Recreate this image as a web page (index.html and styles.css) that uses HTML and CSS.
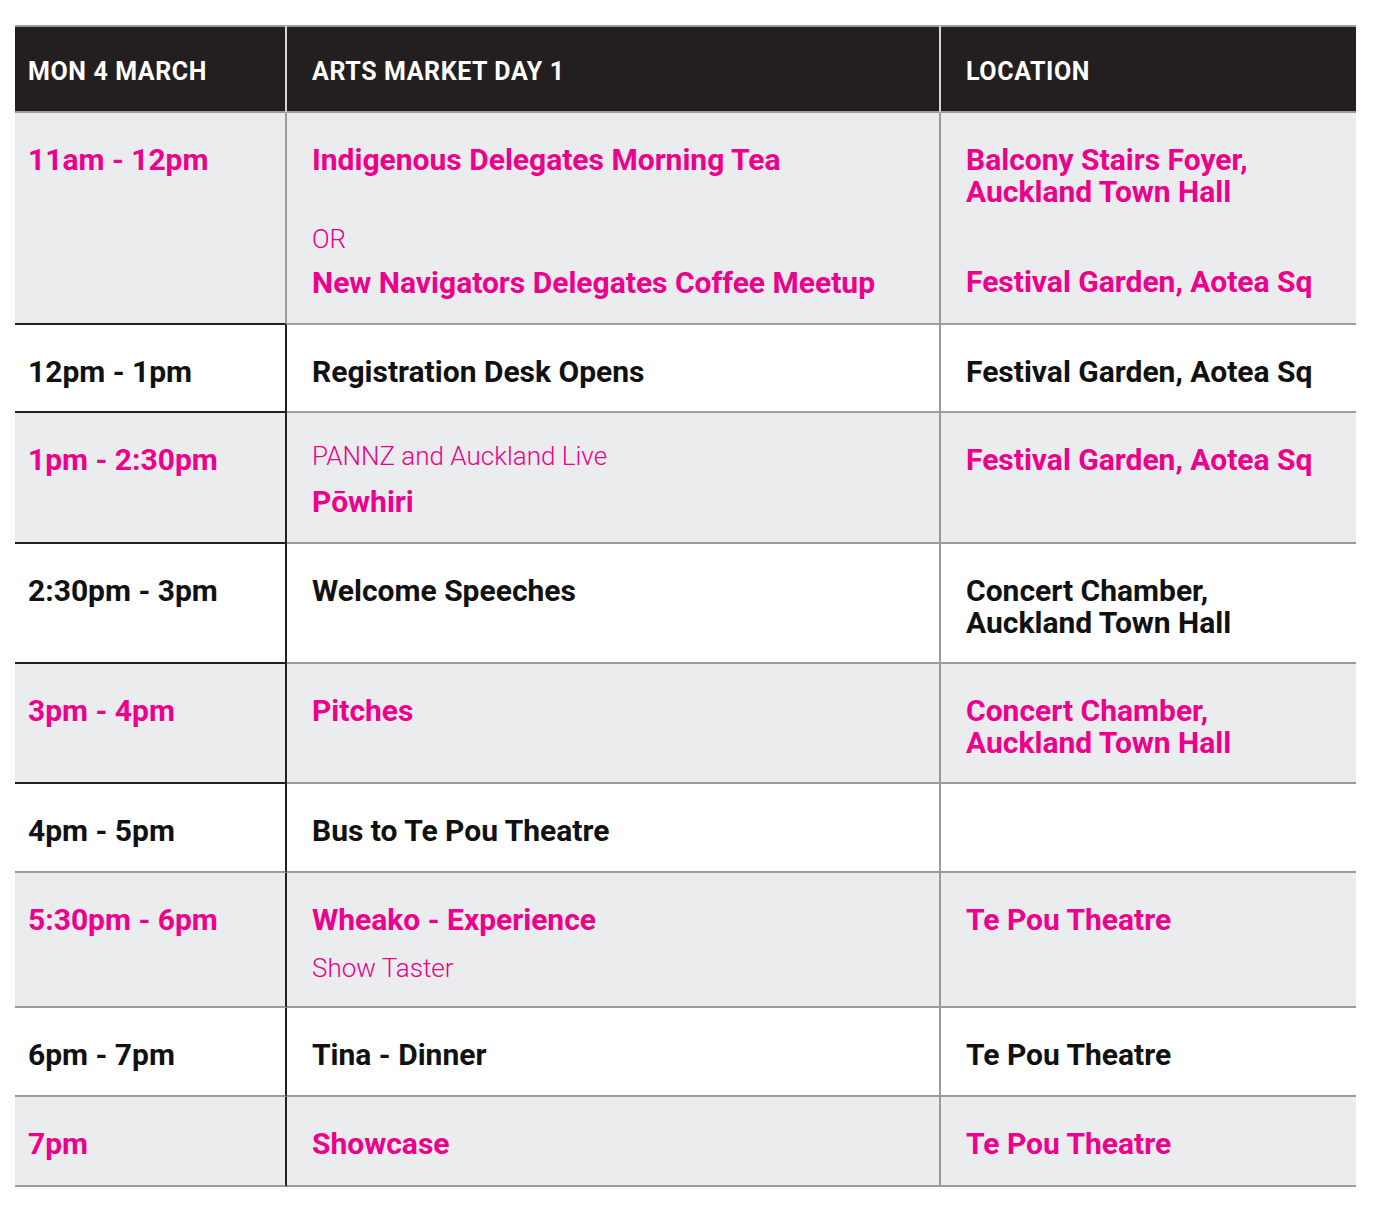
FILE: index.html
```html
<!DOCTYPE html>
<html lang="en">
<head>
<meta charset="utf-8">
<title>Arts Market Day 1</title>
<link rel="stylesheet" href="styles.css">
</head>
<body>
<div class="schedule">
  <div class="head c1">MON 4 MARCH</div>
  <div class="head c2">ARTS MARKET DAY 1</div>
  <div class="head c3">LOCATION</div>

  <div class="cell c1 alt dk first pink"><p class="t">11am - 12pm</p></div>
  <div class="cell c2 alt pink">
    <p class="t">Indigenous Delegates Morning Tea</p>
    <p class="s or">OR</p>
    <p class="t after-or">New Navigators Delegates Coffee Meetup</p>
  </div>
  <div class="cell c3 alt pink">
    <p class="t two">Balcony Stairs Foyer,<br>Auckland Town Hall</p>
    <p class="t gap-loc">Festival Garden, Aotea Sq</p>
  </div>

  <div class="cell c1 dk short"><p class="t">12pm - 1pm</p></div>
  <div class="cell c2 short"><p class="t">Registration Desk Opens</p></div>
  <div class="cell c3 short"><p class="t">Festival Garden, Aotea Sq</p></div>

  <div class="cell c1 alt dk pink"><p class="t">1pm - 2:30pm</p></div>
  <div class="cell c2 alt pink">
    <p class="s lead">PANNZ and Auckland Live</p>
    <p class="t after-s">Pōwhiri</p>
  </div>
  <div class="cell c3 alt pink"><p class="t">Festival Garden, Aotea Sq</p></div>

  <div class="cell c1 dk"><p class="t">2:30pm - 3pm</p></div>
  <div class="cell c2"><p class="t">Welcome Speeches</p></div>
  <div class="cell c3 tight"><p class="t two">Concert Chamber,<br>Auckland Town Hall</p></div>

  <div class="cell c1 alt dk pink"><p class="t">3pm - 4pm</p></div>
  <div class="cell c2 alt pink"><p class="t">Pitches</p></div>
  <div class="cell c3 alt pink tight"><p class="t two">Concert Chamber,<br>Auckland Town Hall</p></div>

  <div class="cell c1"><p class="t">4pm - 5pm</p></div>
  <div class="cell c2"><p class="t">Bus to Te Pou Theatre</p></div>
  <div class="cell c3"></div>

  <div class="cell c1 alt pink"><p class="t">5:30pm - 6pm</p></div>
  <div class="cell c2 alt pink">
    <p class="t">Wheako - Experience</p>
    <p class="s after-t">Show Taster</p>
  </div>
  <div class="cell c3 alt pink"><p class="t">Te Pou Theatre</p></div>

  <div class="cell c1"><p class="t">6pm - 7pm</p></div>
  <div class="cell c2"><p class="t">Tina - Dinner</p></div>
  <div class="cell c3"><p class="t">Te Pou Theatre</p></div>

  <div class="cell c1 alt pink last"><p class="t">7pm</p></div>
  <div class="cell c2 alt pink last"><p class="t">Showcase</p></div>
  <div class="cell c3 alt pink last"><p class="t">Te Pou Theatre</p></div>
</div>
</body>
</html>
```
FILE: styles.css
```css
html, body {
  margin: 0;
  padding: 0;
  background: #ffffff;
}

body {
  padding: 25px 18px 0 15px;
  font-family: "Roboto", "Liberation Sans", sans-serif;
  color: #111111;
}

.schedule {
  display: grid;
  grid-template-columns: 272px 654px 415px;
  width: 1341px;
}

p {
  margin: 0;
}

.head {
  background: #231f20;
  color: #ffffff;
  font-weight: 700;
  font-size: 25px;
  letter-spacing: 0.6px;
  display: flex;
  align-items: center;
  padding-top: 4px;
  box-sizing: border-box;
  border-top: 2px solid #9b9b9b;
  border-bottom: 2px solid #9b9b9b;
  height: 88px;
}

.head.c1 {
  padding-left: 13px;
  border-right: 2px solid #d6d6d6;
}

.head.c2 {
  padding-left: 25px;
  border-right: 2px solid #d6d6d6;
}

.head.c3 {
  padding-left: 25px;
}

.cell {
  padding: 31px 0 25px;
  border-bottom: 2px solid #9b9b9b;
  background: #ffffff;
}

.cell.short {
  padding-bottom: 24px;
}

.cell.tight {
  padding-bottom: 23px;
}

.cell.last {
  padding-bottom: 26px;
}

.cell.alt {
  background: #ebeced;
}

.cell.c1 {
  padding-left: 13px;
  border-right: 2px solid #231f20;
}

.cell.c1.first {
  border-right-color: #9b9b9b;
}

.cell.c1.dk {
  border-bottom-color: #231f20;
}

.cell.c2 {
  padding-left: 25px;
  border-right: 2px solid #9b9b9b;
}

.cell.c3 {
  padding-left: 25px;
}

.t {
  font-weight: 700;
  font-size: 30px;
  line-height: 31px;
}

.t.two {
  line-height: 32px;
}

.s {
  font-weight: 300;
  font-size: 26px;
  line-height: 26px;
}

.pink {
  color: #ec008c;
}

.or {
  margin-top: 51px;
}

.after-or {
  margin-top: 15px;
}

.lead {
  margin-top: -1px;
}

.after-s {
  margin-top: 17px;
}

.after-t {
  margin-top: 20px;
}

.gap-loc {
  margin-top: 58px;
}
```
